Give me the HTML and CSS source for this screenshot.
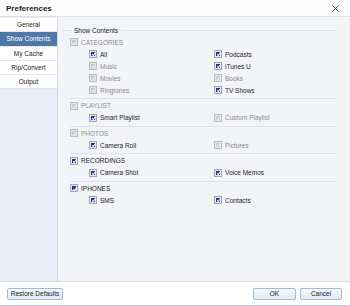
FILE: index.html
```html
<!DOCTYPE html>
<html>
<head>
<meta charset="utf-8">
<link rel="stylesheet" href="styles.css">
</head>
<body>
<div class="window">
  <div class="titlebar">
    <span class="title">Preferences</span>
    <svg class="close" width="7" height="7" viewBox="0 0 7 7"><path d="M0.5 0.5 L6.5 6.5 M6.5 0.5 L0.5 6.5" stroke="#444" stroke-width="0.9" fill="none"/></svg>
  </div>
  <div class="main">
    <div class="sidebar">
      <div class="nav">General</div>
      <div class="nav active">Show Contents</div>
      <div class="nav">My Cache</div>
      <div class="nav">Rip/Convert</div>
      <div class="nav">Output</div>
    </div>
    <div class="content">
      <div class="legend"><span class="lline short"></span><span class="ltext">Show Contents</span><span class="lline"></span></div>

      <div class="section">
        <div class="head dis"><span class="cb off"></span>CATEGORIES</div>
        <div class="items">
          <div class="item"><span class="cb"></span>All</div>
          <div class="item"><span class="cb"></span>Podcasts</div>
          <div class="item dis"><span class="cb off"></span>Music</div>
          <div class="item"><span class="cb"></span>iTunes U</div>
          <div class="item dis"><span class="cb off"></span>Movies</div>
          <div class="item dis"><span class="cb off"></span>Books</div>
          <div class="item dis"><span class="cb off"></span>Ringtones</div>
          <div class="item"><span class="cb"></span>TV Shows</div>
        </div>
      </div>

      <div class="section">
        <div class="head dis"><span class="cb off"></span>PLAYLIST</div>
        <div class="items">
          <div class="item"><span class="cb"></span>Smart Playlist</div>
          <div class="item dis"><span class="cb off"></span>Custom Playlist</div>
        </div>
      </div>

      <div class="section">
        <div class="head dis"><span class="cb off"></span>PHOTOS</div>
        <div class="items">
          <div class="item"><span class="cb"></span>Camera Roll</div>
          <div class="item dis"><span class="cb off"></span>Pictures</div>
        </div>
      </div>

      <div class="section">
        <div class="head"><span class="cb"></span>RECORDINGS</div>
        <div class="items">
          <div class="item"><span class="cb"></span>Camera Shot</div>
          <div class="item"><span class="cb"></span>Voice Memos</div>
        </div>
      </div>

      <div class="section last">
        <div class="head"><span class="cb"></span>IPHONES</div>
        <div class="items">
          <div class="item"><span class="cb"></span>SMS</div>
          <div class="item"><span class="cb"></span>Contacts</div>
        </div>
      </div>
    </div>
  </div>
  <div class="footer">
    <button class="btn restore">Restore Defaults</button>
    <div class="right">
      <button class="btn ok">OK</button>
      <button class="btn cancel">Cancel</button>
    </div>
  </div>
</div>
</body>
</html>
```
FILE: styles.css
```css
html, body {
  margin: 0;
  padding: 0;
}
body {
  width: 350px;
  height: 306px;
  overflow: hidden;
  font-family: "Liberation Sans", Arial, sans-serif;
  font-size: 6.5px;
  color: #1e1e1e;
  background: #fff;
}
.window {
  display: flex;
  flex-direction: column;
  height: 306px;
  box-sizing: border-box;
  border-bottom: 1px solid #c9ccd3;
}
.titlebar {
  height: 16px;
  border-bottom: 1px solid #dde1e8;
  display: flex;
  align-items: center;
  justify-content: space-between;
  padding: 0 11px 0 6px;
  background: #fdfdfd;
}
.title {
  font-weight: bold;
  font-size: 8px;
  color: #1a1a1a;
}
.close {
  display: block;
}
.main {
  flex: 1;
  display: flex;
  min-height: 0;
}
.sidebar {
  width: 57px;
  background: #e9ecf5;
  border-right: 1px solid #d5d9e3;
  padding-top: 1px;
}
.nav {
  box-sizing: border-box;
  height: 14.25px;
  display: flex;
  align-items: center;
  justify-content: center;
  background: #fff;
  border-bottom: 1px solid #e2e5ec;
  color: #222;
}
.nav.active {
  background: #4f78a6;
  color: #fff;
}
.content {
  flex: 1;
  background: #f3f4f8;
  padding: 8.5px 14px 0 5px;
}
.legend {
  height: 10px;
  display: flex;
  align-items: center;
  gap: 2px;
}
.lline {
  flex: 1;
  height: 1px;
  background: #dde2ec;
}
.lline.short {
  flex: 0 0 9px;
}
.ltext {
  padding-right: 1px;
  color: #222;
}
.section {
  margin-left: 7px;
  padding: 1px 0 2px;
  border-bottom: 1px solid #dde3ee;
}
.section:first-of-type {
  padding-top: 0;
}
.section.last {
  border-bottom: none;
}
.head {
  height: 11.5px;
  display: flex;
  align-items: center;
  gap: 3px;
}
.items {
  display: grid;
  grid-template-columns: 125px 1fr;
  padding-left: 19px;
}
.item {
  height: 12px;
  display: flex;
  align-items: center;
  gap: 3px;
}
.dis {
  color: #8c8c8c;
}
.cb {
  box-sizing: border-box;
  width: 8px;
  height: 8px;
  flex: 0 0 8px;
  border: 1px solid #a3a7b3;
  background: #2e3190;
  box-shadow: inset 0 0 0 1px #e3e5ec;
  position: relative;
}
.cb::after {
  content: "";
  position: absolute;
  left: 2.6px;
  top: 1.4px;
  width: 1.2px;
  height: 2.6px;
  border-right: 1px solid #fff;
  border-bottom: 1px solid #fff;
  transform: rotate(40deg);
}
.cb.off {
  border-color: #b9bcc3;
  background: #c9cbd1;
  box-shadow: inset 0 0 0 1px #e4e5e9;
}
.cb.off::after {
  border-color: #eeeff2;
}
.footer {
  height: 23px;
  border-top: 1px solid #d7dbe3;
  background: #fff;
  display: flex;
  align-items: center;
  justify-content: space-between;
  padding: 0 8px 0 7px;
}
.right {
  display: flex;
  gap: 4px;
}
.btn {
  font-family: "Liberation Sans", Arial, sans-serif;
  font-size: 6.5px;
  color: #222;
  height: 12px;
  padding: 0;
  border: 1px solid #a5bbd0;
  border-radius: 2px;
  background: linear-gradient(#f3f8fd, #e0ebf6);
  box-sizing: border-box;
}
.restore {
  width: 56px;
}
.ok {
  width: 43px;
}
.cancel {
  width: 42px;
}
```
